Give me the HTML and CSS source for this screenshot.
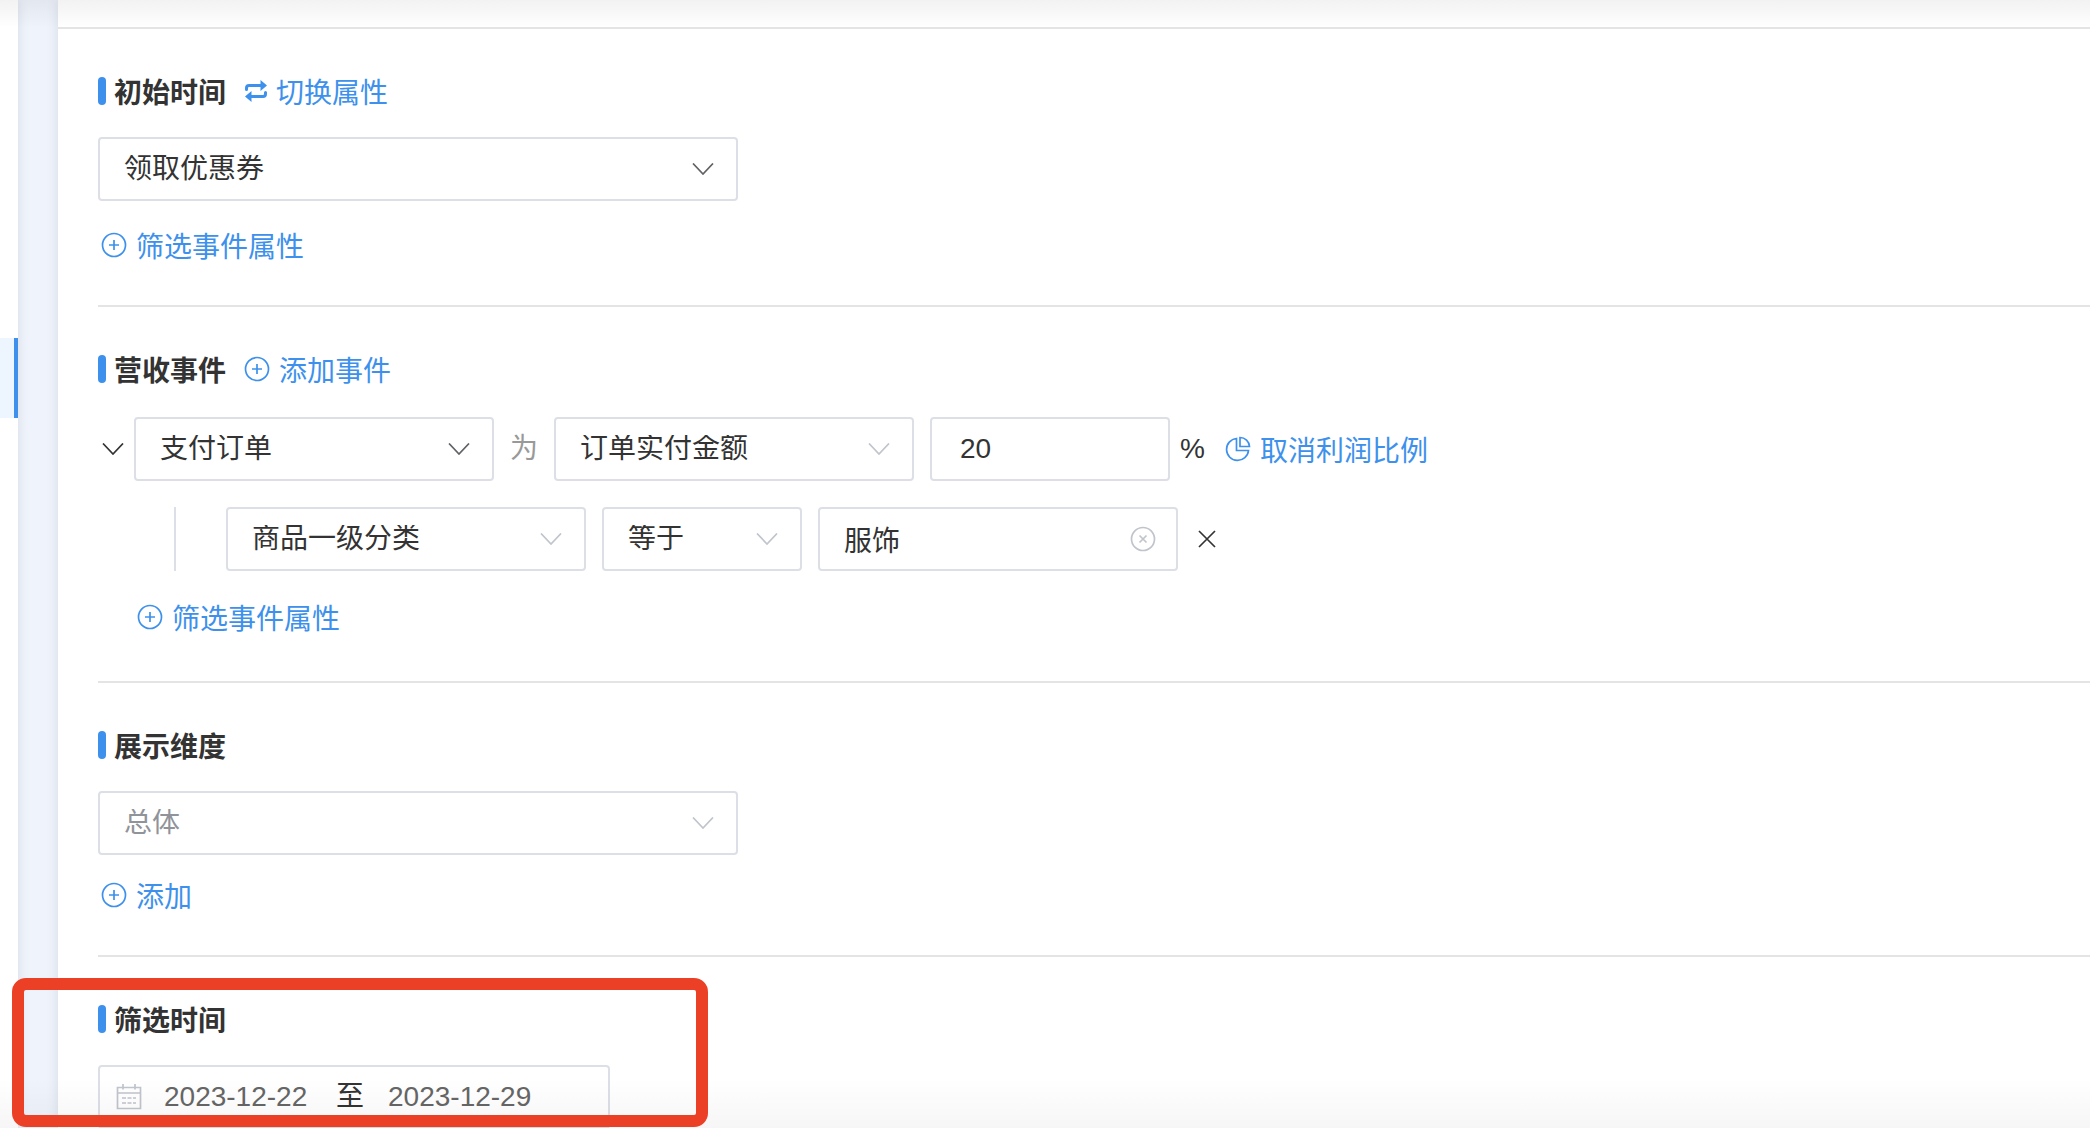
FILE: index.html
```html
<!DOCTYPE html>
<html lang="zh-CN">
<head>
<meta charset="utf-8">
<meta name="viewport" content="width=device-width, initial-scale=1">
<title>归因分析</title>
<link rel="stylesheet" href="styles.css">
</head>
<body>
<svg class="sprite" aria-hidden="true">
  <symbol id="i-down" viewBox="0 0 22 12"><path d="M1 .5l10 10.500L21 .5"/></symbol>
  <symbol id="i-plus" viewBox="0 0 26 26"><circle cx="13" cy="13" r="11.5"/><path d="M13 8v10M8 13h10"/></symbol>
  <symbol id="i-swap" viewBox="0 0 22 22"><path class="thick" d="M1.5 9.500V8Q1.500 5.500 4 5.500H17M20.500 12.500V14Q20.500 16.500 18 16.500H5"/><path class="solid" d="M15.500 0l6.500 5.500-6.500 5.500zM6.500 11v11L0 16.500z"/></symbol>
  <symbol id="i-pie" viewBox="0 0 26 26"><path d="M11.500 2.500A11 11 0 1 0 23.500 14.500H11.500z"/><path d="M15 1.500V10.500H24.500A9.500 9.500 0 0 0 15 1.500z"/></symbol>
  <symbol id="i-clear" viewBox="0 0 26 26"><circle cx="13" cy="13" r="11.500"/><path d="M9.500 9.500l7 7M16.500 9.500l-7 7"/></symbol>
  <symbol id="i-close" viewBox="0 0 18 18"><path d="M1 1l16 16M17 1L1 17"/></symbol>
  <symbol id="i-date" viewBox="0 0 26 26"><path d="M1.500 3.500h23v21h-23zM1.500 9h23M7 0v5.500M19 0v5.500"/><path d="M6 14h4M11.500 14h4M17 14h3M6 19h4M11.500 19h4M17 19h3"/></symbol>
</svg>
<div class="app">
  <nav class="sidebar" aria-label="导航"><a class="sidebar-current" href="#" aria-current="page"></a></nav>
  <main class="card">
    <section class="section">
      <header class="head">
        <h2 class="title">初始时间</h2>
        <a class="link link-swap" href="#"><svg class="icon-swap"><use href="#i-swap"/></svg>切换属性</a>
      </header>
      <div class="field field-wide">
        <select class="control" aria-label="初始事件"><option>领取优惠券</option></select>
        <svg class="arrow arrow-dark"><use href="#i-down"/></svg>
      </div>
      <a class="link link-below" href="#"><svg class="icon"><use href="#i-plus"/></svg>筛选事件属性</a>
    </section>

    <section class="section">
      <header class="head">
        <h2 class="title">营收事件</h2>
        <a class="link" href="#"><svg class="icon"><use href="#i-plus"/></svg>添加事件</a>
      </header>
      <div class="event">
        <button class="fold" type="button" aria-label="收起"><svg class="icon-fold"><use href="#i-down"/></svg></button>
        <div class="event-body">
          <div class="row">
            <div class="field">
              <select class="control" aria-label="事件"><option>支付订单</option></select>
              <svg class="arrow arrow-dark"><use href="#i-down"/></svg>
            </div>
            <span class="word">为</span>
            <div class="field">
              <select class="control" aria-label="指标"><option>订单实付金额</option></select>
              <svg class="arrow"><use href="#i-down"/></svg>
            </div>
            <div class="ratio">
              <input class="control control-number" id="ratio" type="text" value="20">
              <label for="ratio">%</label>
            </div>
            <a class="link" href="#"><svg class="icon"><use href="#i-pie"/></svg>取消利润比例</a>
          </div>
          <div class="row row-filter">
            <div class="field">
              <select class="control" aria-label="属性"><option>商品一级分类</option></select>
              <svg class="arrow"><use href="#i-down"/></svg>
            </div>
            <div class="field field-short">
              <select class="control" aria-label="条件"><option>等于</option></select>
              <svg class="arrow"><use href="#i-down"/></svg>
            </div>
            <div class="field">
              <input class="control" type="text" value="服饰" aria-label="属性值">
              <button class="clear" type="button" aria-label="清空"><svg class="icon"><use href="#i-clear"/></svg></button>
            </div>
            <button class="remove" type="button" aria-label="删除"><svg class="icon-close"><use href="#i-close"/></svg></button>
          </div>
          <a class="link link-below link-far" href="#"><svg class="icon"><use href="#i-plus"/></svg>筛选事件属性</a>
        </div>
      </div>
    </section>

    <section class="section">
      <header class="head"><h2 class="title">展示维度</h2></header>
      <div class="field field-wide">
        <select class="control control-muted" aria-label="展示维度"><option>总体</option></select>
        <svg class="arrow"><use href="#i-down"/></svg>
      </div>
      <a class="link link-below link-near" href="#"><svg class="icon"><use href="#i-plus"/></svg>添加</a>
    </section>

    <section class="section">
      <header class="head"><h2 class="title">筛选时间</h2></header>
      <div class="range">
        <svg class="icon icon-pale"><use href="#i-date"/></svg>
        <input class="date" type="text" value="2023-12-22" aria-label="开始日期">
        <span>至</span>
        <input class="date" type="text" value="2023-12-29" aria-label="结束日期">
      </div>
    </section>
  </main>
  <div class="fade fade-top"></div>
  <div class="fade fade-bottom"></div>
  <div class="highlight"></div>
</div>
</body>
</html>
```
FILE: styles.css
```css
:root {
  --blue: #3d91ec;
  --ink: #333;
  --border: #dcdfe6;
  --line: #e4e4e4;
  --pale: #c0c4cc;
}

* { box-sizing: border-box; }

body {
  margin: 0;
  background: #eff3fc;
  color: var(--ink);
  font: 28px/28px "Liberation Sans", "Noto Sans CJK SC", sans-serif;
}

.sprite { position: absolute; width: 0; height: 0; }

svg {
  display: block;
  flex: none;
  fill: none;
  stroke: currentColor;
  stroke-width: 1.7;
}
.thick { stroke-width: 3; stroke-linecap: round; }
.solid { fill: currentColor; stroke: none; }
.icon { width: 26px; height: 26px; }
.icon-pale { color: var(--pale); }
.icon-swap { width: 22px; height: 22px; }
.icon-fold { width: 22px; height: 12px; }
.icon-close { width: 18px; height: 18px; }

.app {
  position: relative;
  display: flex;
  gap: 40px;
  height: 100vh;
  overflow: hidden;
}

.sidebar {
  flex: none;
  width: 18px;
  padding-top: 338px;
  background: #fff;
  box-shadow: 0 0 12px rgba(0, 0, 0, .1);
}
.sidebar-current {
  display: block;
  height: 80px;
  background: #edf6ff;
  border-right: 4px solid var(--blue);
}

.card {
  flex: 1;
  min-width: 0;
  padding: 27px 0 0 40px;
  background: #fff;
  box-shadow: 0 0 12px rgba(0, 0, 0, .1);
}

.section {
  padding: 48px 0 46px;
  border-top: 2px solid var(--line);
}
.section:first-child { margin-left: -40px; padding-left: 40px; }

.head {
  display: flex;
  align-items: center;
  gap: 18px;
  margin-bottom: 32px;
}
.title,
.link { font-family: "Noto Sans CJK SC", sans-serif; }
.title {
  display: flex;
  gap: 8px;
  margin: 0;
  font-size: 28px;
  font-weight: 700;
}
.title::before {
  content: "";
  width: 8px;
  height: 28px;
  border-radius: 4px;
  background: var(--blue);
}

.link {
  display: inline-flex;
  align-items: center;
  gap: 9px;
  color: var(--blue);
  text-decoration: none;
}
.link-swap { padding-left: 1px; }
.link-below {
  display: flex;
  width: max-content;
  margin-top: 30px;
  padding-left: 3px;
}
.link-near { margin-top: 26px; }
.link-far { margin-top: 32px; }

.field { position: relative; flex: none; width: 360px; }
.field-wide { width: 640px; }
.field-short { width: 200px; }

.control {
  display: block;
  width: 100%;
  height: 64px;
  padding: 0 24px;
  border: 2px solid var(--border);
  border-radius: 4px;
  background: #fff;
  color: var(--ink);
  font: inherit;
  appearance: none;
}
.control-number { width: 240px; padding: 0 28px; }
.control-muted { color: #909399; }

.arrow {
  position: absolute;
  top: 26px;
  right: 24px;
  width: 22px;
  height: 12px;
  color: var(--pale);
  pointer-events: none;
}
.arrow-dark { color: #606266; }

button {
  display: flex;
  align-items: center;
  padding: 0;
  border: 0;
  background: none;
  color: inherit;
  cursor: pointer;
}
.clear {
  position: absolute;
  top: 19px;
  right: 22px;
  color: var(--pale);
}
.remove { margin-left: 4px; }

.event { display: flex; align-items: flex-start; margin-bottom: 4px; }
.fold { width: 36px; height: 68px; padding-left: 4px; }
.event-body { flex: 1; min-width: 0; padding-top: 2px; }
.row { display: flex; align-items: center; gap: 16px; }
.row-filter {
  margin: 26px 0 0 40px;
  padding-left: 50px;
  border-left: 2px solid var(--border);
}
.word { color: #999; }
.ratio { display: flex; align-items: center; gap: 10px; margin-right: 4px; }

.range {
  display: flex;
  align-items: center;
  width: 512px;
  height: 64px;
  padding: 0 16px;
  border: 2px solid var(--border);
  border-radius: 4px;
}
.date {
  width: 172px;
  margin-left: 22px;
  padding: 0;
  border: 0;
  background: none;
  color: #666;
  font: inherit;
}
.range span + .date { margin-left: 24px; }

.fade {
  position: absolute;
  left: 0;
  right: 0;
  pointer-events: none;
}
.fade-top {
  top: 0;
  height: 28px;
  background: linear-gradient(rgba(0, 0, 0, .05), transparent);
}
.fade-bottom {
  bottom: 0;
  height: 50px;
  background: linear-gradient(transparent, rgba(0, 0, 0, .035));
}

.highlight {
  position: absolute;
  left: 12px;
  bottom: 1px;
  width: 696px;
  height: 149px;
  border: 12px solid #ec4026;
  border-radius: 14px;
  pointer-events: none;
}
```
